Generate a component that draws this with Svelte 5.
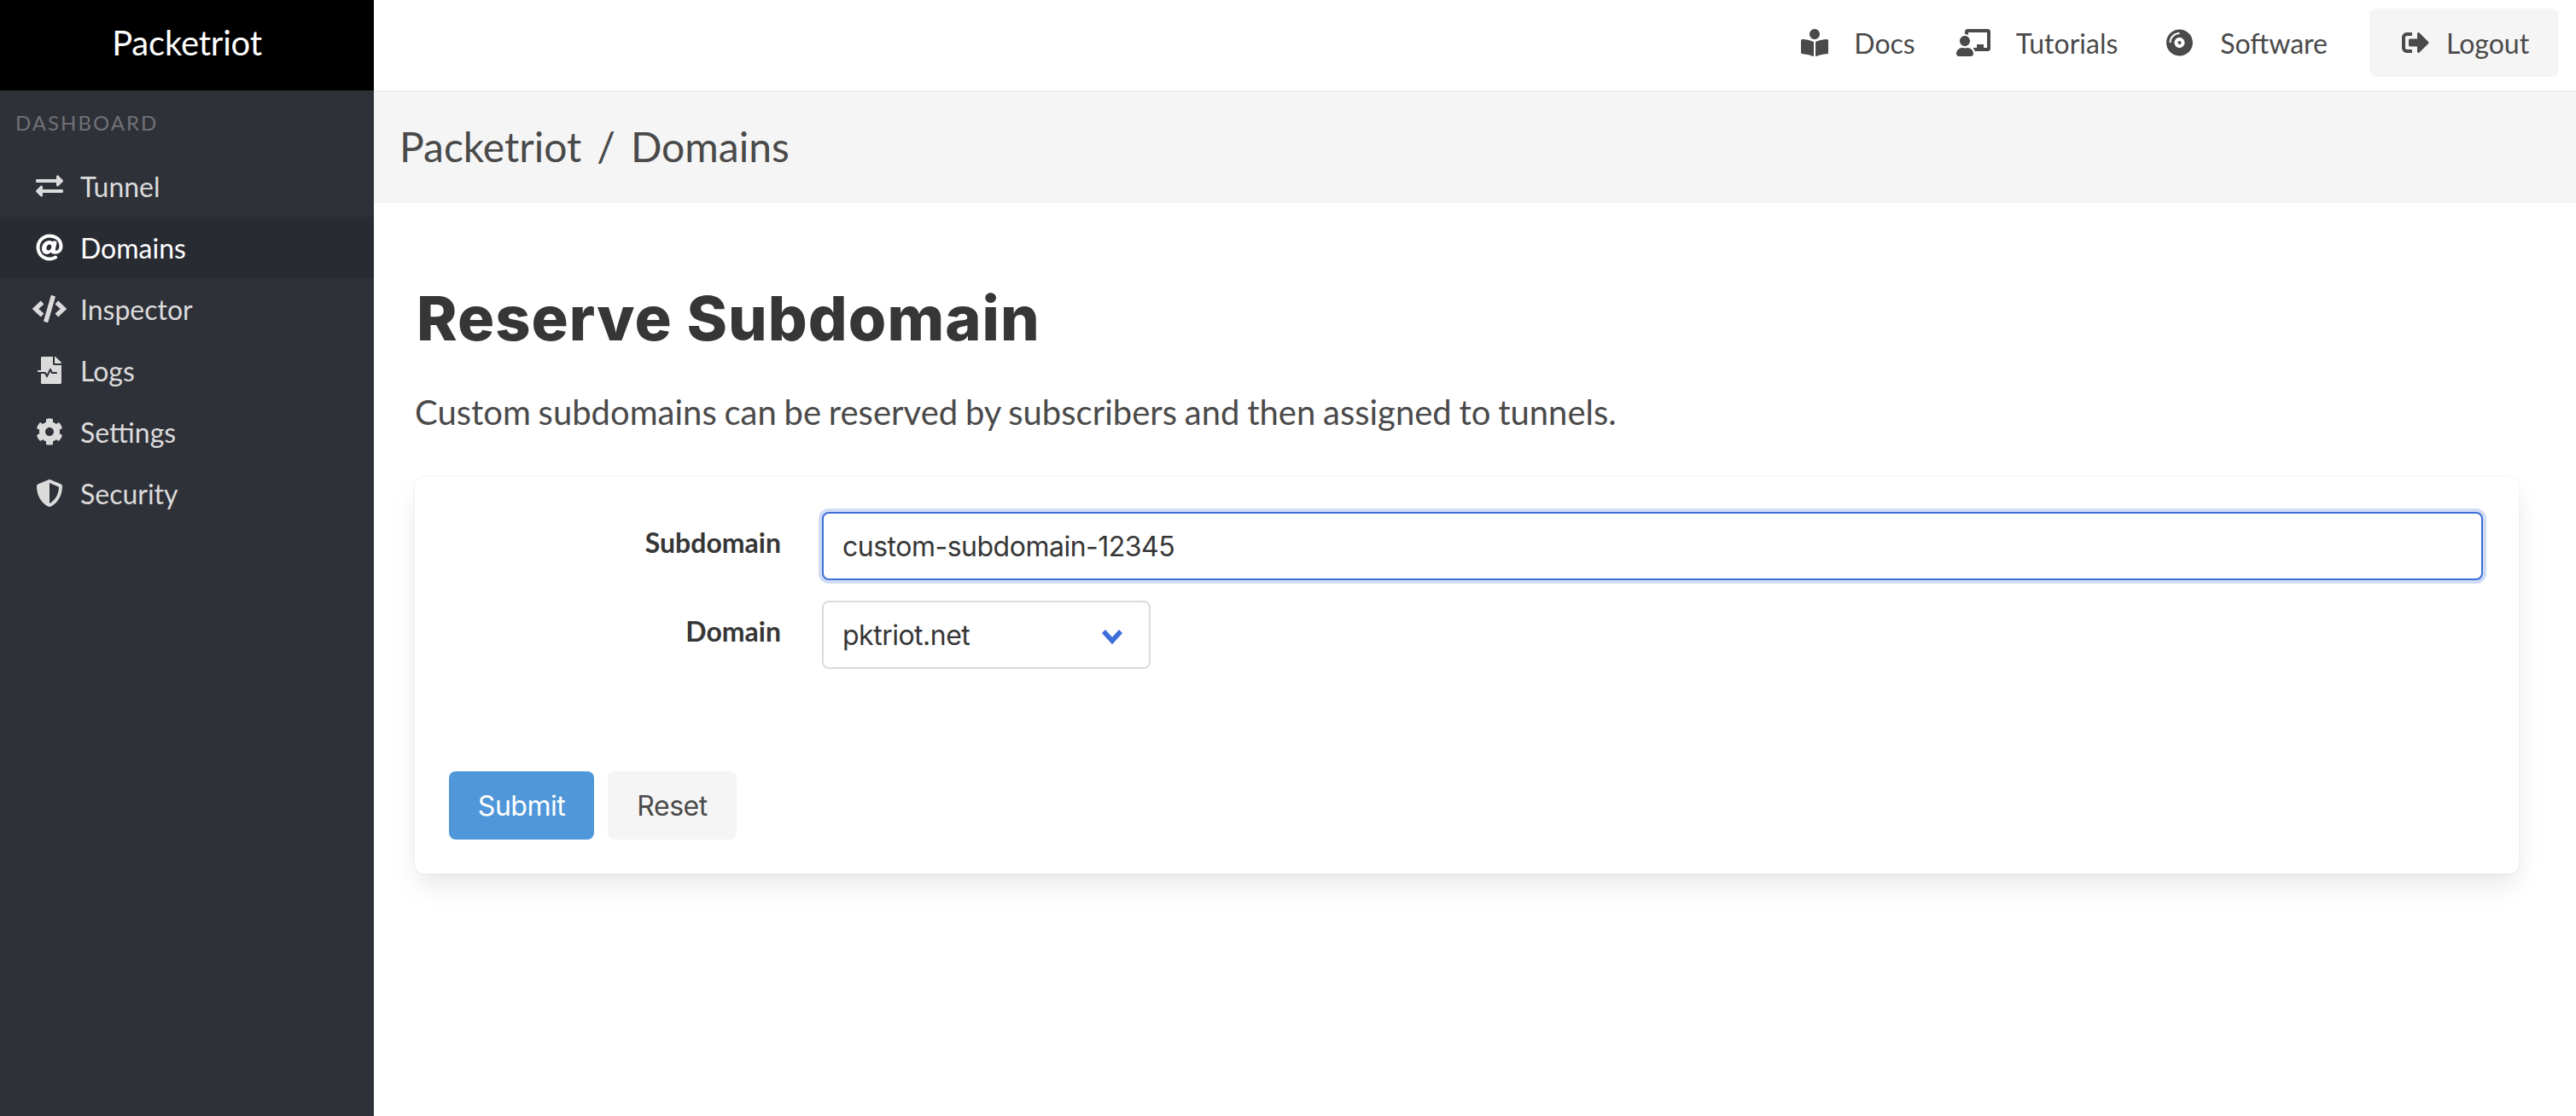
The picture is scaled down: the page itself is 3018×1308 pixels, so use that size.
<script>
  const I = {
    tunnel: [512, "M0 168v-16c0-13.255 10.745-24 24-24h360V80c0-21.367 25.899-32.042 40.971-16.971l80 80c9.372 9.373 9.372 24.569 0 33.941l-80 80C409.956 271.982 384 261.456 384 240v-48H24c-13.255 0-24-10.745-24-24zm488 152H128v-48c0-21.314-25.862-32.08-40.971-16.971l-80 80c-9.372 9.373-9.372 24.569 0 33.941l80 80C102.057 463.997 128 453.437 128 432v-48h360c13.255 0 24-10.745 24-24v-16c0-13.255-10.745-24-24-24z"],
    at: [512, "M256 8C118.941 8 8 118.919 8 256c0 137.059 110.919 248 248 248 48.154 0 95.342-14.14 135.408-40.223 12.005-7.815 14.625-24.288 5.552-35.372l-10.177-12.433c-7.671-9.371-21.179-11.667-31.373-5.129C325.92 429.757 291.314 440 256 440c-101.458 0-184-82.542-184-184S154.542 72 256 72c100.139 0 184 57.619 184 160 0 38.786-21.093 79.742-58.17 83.693-17.349-.454-16.91-12.857-13.476-30.024l23.433-121.11C394.653 149.75 383.308 136 368.225 136h-44.981a13.518 13.518 0 0 0-13.432 11.993l-.01.092c-14.697-17.901-40.448-21.775-59.971-21.775-74.58 0-137.831 62.234-137.831 151.46 0 65.303 36.785 105.87 96 105.87 26.984 0 57.369-15.637 74.991-38.333 9.522 34.104 40.613 34.103 70.71 34.103C462.609 379.41 504 307.798 504 232 504 95.653 394.023 8 256 8zm-21.68 304.43c-22.249 0-36.07-15.623-36.07-40.771 0-44.993 30.779-72.729 58.63-72.729 22.292 0 35.601 15.241 35.601 40.77 0 45.061-33.875 72.73-58.161 72.73z"],
    code: [640, "M278.9 511.5l-61-17.7c-6.4-1.8-10-8.5-8.2-14.9L346.2 8.7c1.8-6.4 8.5-10 14.9-8.2l61 17.7c6.4 1.8 10 8.5 8.2 14.9L293.8 503.3c-1.9 6.4-8.5 10.1-14.9 8.2zm-114-112.2l43.5-46.4c4.6-4.9 4.3-12.7-.8-17.2L117 256l90.6-79.7c5.1-4.5 5.5-12.3.8-17.2l-43.5-46.4c-4.5-4.8-12.1-5.1-17-.5L3.8 247.2c-5.1 4.7-5.1 12.8 0 17.5l144.1 135.1c4.9 4.6 12.5 4.4 17-.5zm327.2.6l144.1-135.1c5.1-4.7 5.1-12.8 0-17.5L492.1 112.1c-4.8-4.5-12.4-4.3-17 .5L431.6 159c-4.6 4.9-4.3 12.7.8 17.2L523 256l-90.6 79.7c-5.1 4.5-5.5 12.3-.8 17.2l43.5 46.4c4.5 4.9 12.1 5.1 17 .6z"],
    logs: [448, "M288 136V0H88C74.7 0 64 10.7 64 24v232H8c-4.4 0-8 3.6-8 8v16c0 4.4 3.6 8 8 8h140.9c3 0 5.8 1.7 7.2 4.4l19.9 39.8 56.8-113.7c2.9-5.9 11.4-5.9 14.3 0l34.7 69.5H352c8.8 0 16 7.2 16 16s-7.2 16-16 16h-89.9L240 275.8l-56.8 113.7c-2.9 5.9-11.4 5.9-14.3 0L134.1 320H64v168c0 13.3 10.7 24 24 24h336c13.3 0 24-10.7 24-24V160H312c-13.2 0-24-10.8-24-24zm153-31L343.1 7c-4.5-4.5-10.6-7-17-7H320v128h128v-6.1c0-6.3-2.5-12.4-7-16.9z"],
    cog: [512, "M487.4 315.7l-42.6-24.6c4.3-23.2 4.3-47 0-70.2l42.6-24.6c4.9-2.8 7.1-8.6 5.5-14-11.1-35.6-30-67.8-54.7-94.6-3.8-4.1-10-5.1-14.8-2.3L380.8 110c-17.9-15.4-38.5-27.3-60.8-35.1V25.8c0-5.6-3.9-10.5-9.4-11.7-36.7-8.2-74.3-7.8-109.2 0-5.5 1.2-9.4 6.1-9.4 11.7V75c-22.2 7.9-42.8 19.8-60.8 35.1L88.7 85.5c-4.9-2.8-11-1.9-14.8 2.3-24.7 26.7-43.6 58.9-54.7 94.6-1.7 5.4.6 11.2 5.5 14L67.3 221c-4.3 23.2-4.3 47 0 70.2l-42.6 24.6c-4.9 2.8-7.1 8.6-5.5 14 11.1 35.6 30 67.8 54.7 94.6 3.8 4.1 10 5.1 14.8 2.3l42.6-24.6c17.9 15.4 38.5 27.3 60.8 35.1v49.2c0 5.6 3.9 10.5 9.4 11.7 36.7 8.2 74.3 7.8 109.2 0 5.5-1.2 9.4-6.1 9.4-11.7v-49.2c22.2-7.9 42.8-19.8 60.8-35.1l42.6 24.6c4.9 2.8 11 1.9 14.8-2.3 24.7-26.7 43.6-58.9 54.7-94.6 1.5-5.5-.7-11.3-5.6-14.1zM256 336c-44.1 0-80-35.9-80-80s35.9-80 80-80 80 35.9 80 80-35.9 80-80 80z"],
    shield: [512, "M466.5 83.7l-192-80a48.15 48.15 0 0 0-36.9 0l-192 80C27.7 91.1 16 108.6 16 128c0 198.5 114.5 335.7 221.5 380.3 11.8 4.9 25.1 4.9 36.9 0C360.1 472.6 496 349.3 496 128c0-19.4-11.7-36.9-29.5-44.3zM256.1 446.3l-.1-381 175.9 73.3c-3.3 151.4-82.1 261.1-175.8 307.7z"],
    book: [512, "M352 96c0-53.02-42.98-96-96-96s-96 42.98-96 96 42.98 96 96 96 96-42.98 96-96zM233.59 241.1c-59.33-36.32-155.43-46.3-203.79-49.05C13.55 191.13 0 203.51 0 219.14v222.8c0 14.33 11.59 26.28 26.49 27.05 43.66 2.29 131.99 10.68 193.04 41.43 9.37 4.72 20.48-1.71 20.48-11.87V252.56c-.01-4.67-2.32-8.95-6.42-11.46zm248.61-49.05c-48.35 2.74-144.46 12.73-203.78 49.05-4.1 2.51-6.41 6.96-6.41 11.63v245.79c0 10.19 11.14 16.63 20.54 11.9 61.04-30.72 149.32-39.11 192.97-41.4 14.9-.78 26.49-12.73 26.49-27.06V219.14c-.01-15.63-13.56-28.01-29.81-27.09z"],
    teacher: [640, "M208 352c-2.39 0-4.78.35-7.06 1.09C187.98 357.3 174.35 360 160 360c-14.35 0-27.98-2.7-40.95-6.91-2.28-.74-4.66-1.09-7.05-1.09C49.94 352-.33 402.48 0 464.62.14 490.88 21.73 512 48 512h224c26.27 0 47.86-21.12 48-47.38.33-62.14-49.94-112.62-112-112.62zm-48-32c53.02 0 96-42.98 96-96s-42.98-96-96-96-96 42.98-96 96 42.98 96 96 96zM592 0H208c-26.47 0-48 22.25-48 49.59V96c23.42 0 45.1 6.78 64 17.8V64h352v288h-64v-64H384v64h-76.24c19.1 16.69 33.12 38.73 39.69 64H592c26.47 0 48-22.25 48-49.59V49.59C640 22.25 618.47 0 592 0z"],
    disc: [496, "M248 8C111 8 0 119 0 256s111 248 248 248 248-111 248-248S385 8 248 8zM88 256H56c0-105.9 86.1-192 192-192v32c-88.2 0-160 71.8-160 160zm160 96c-53 0-96-43-96-96s43-96 96-96 96 43 96 96-43 96-96 96zm0-128c-17.7 0-32 14.3-32 32s14.3 32 32 32 32-14.3 32-32-14.3-32-32-32z"],
    out: [512, "M497 273L329 441c-15 15-41 4.5-41-17v-96H152c-13.3 0-24-10.7-24-24v-96c0-13.3 10.7-24 24-24h136V88c0-21.4 25.9-32 41-17l168 168c9.3 9.4 9.3 24.6 0 34zM192 436v-40c0-6.6-5.4-12-12-12H96c-17.7 0-32-14.3-32-32V160c0-17.7 14.3-32 32-32h84c6.6 0 12-5.4 12-12V76c0-6.6-5.4-12-12-12H96c-53 0-96 43-96 96v192c0 53 43 96 96 96h84c6.6 0 12-5.4 12-12z"]
  };
  const menu = [
    { label: 'Tunnel', icon: 'tunnel' },
    { label: 'Domains', icon: 'at', active: true },
    { label: 'Inspector', icon: 'code' },
    { label: 'Logs', icon: 'logs' },
    { label: 'Settings', icon: 'cog' },
    { label: 'Security', icon: 'shield' }
  ];
  const links = [
    { label: 'Docs', icon: 'book' },
    { label: 'Tutorials', icon: 'teacher' },
    { label: 'Software', icon: 'disc' }
  ];
</script>

{#snippet icon(name)}
  <svg class="icon" viewBox="0 0 {I[name][0]} 512" aria-hidden="true"><path fill="currentColor" d={I[name][1]} /></svg>
{/snippet}

<div class="app">
  <aside class="sidebar">
    <div class="brand">Packetriot</div>
    <p class="menu-label">DASHBOARD</p>
    <ul class="menu">
      {#each menu as m}
        <li class:active={m.active}>
          <span class="ico">{@render icon(m.icon)}</span>
          <span>{m.label}</span>
        </li>
      {/each}
    </ul>
  </aside>

  <div class="main">
    <header class="top">
      {#each links as l}
        <a class="link" href="#top">
          <span class="ico">{@render icon(l.icon)}</span>
          <span>{l.label}</span>
        </a>
      {/each}
      <a class="logout" href="#top">
        <span class="ico">{@render icon('out')}</span>
        <span>Logout</span>
      </a>
    </header>

    <div class="crumb"><span>Packetriot</span><span class="sep">/</span><span>Domains</span></div>

    <section class="content">
      <h1>Reserve Subdomain</h1>
      <p class="lead">Custom subdomains can be reserved by subscribers and then assigned to tunnels.</p>

      <form class="box">
        <div class="row">
          <label for="sub">Subdomain</label>
          <input id="sub" class="input" type="text" value="custom-subdomain-12345" />
        </div>
        <div class="row">
          <label for="dom">Domain</label>
          <div class="select">
            <select id="dom"><option>pktriot.net</option></select>
            <svg class="chev" viewBox="0 0 14 10" preserveAspectRatio="none" aria-hidden="true"><path d="M1.6 1.6 7 7.4l5.4-5.8" fill="none" stroke="currentColor" stroke-width="3" /></svg>
          </div>
        </div>
        <div class="buttons">
          <button type="button" class="btn primary">Submit</button>
          <button type="button" class="btn">Reset</button>
        </div>
      </form>
    </section>
  </div>
</div>

<style>
  :global(body) { margin: 0; background: #fff; }
  :global(*) { box-sizing: border-box; }
  .app {
    display: flex;
    height: 1308px;
    overflow: hidden;
    font-family: Lato, "Open Sans", sans-serif;
    font-size: 32px;
    color: #4a4a4a;
  }
  .icon { height: 32px; display: block; }
  .ico { width: 40px; display: flex; justify-content: center; flex: none; }

  .sidebar { width: 438px; flex: none; background: #2f3139; }
  .brand {
    height: 106px;
    background: #000;
    color: #fff;
    font-size: 40px;
    letter-spacing: -0.2px;
    line-height: 100px;
    text-align: center;
  }
  .menu-label {
    margin: 0;
    padding: 22px 0 0 18px;
    height: 76px;
    font-size: 24px;
    line-height: 32px;
    letter-spacing: 2px;
    color: #6f7176;
  }
  .menu { list-style: none; margin: 0; padding: 0; }
  .menu li {
    height: 72px;
    padding-left: 38px;
    display: flex;
    align-items: center;
    gap: 16px;
    color: #dbdbdb;
  }
  .menu li.active { background: #292b33; color: #fff; }

  .main { flex: 1; min-width: 0; display: flex; flex-direction: column; }
  .top {
    height: 108px;
    flex: none;
    border-bottom: 2px solid #eeeeee;
    display: flex;
    justify-content: flex-end;
    align-items: center;
    padding: 0 20px 6px 0;
  }
  a { color: inherit; text-decoration: none; display: flex; align-items: center; }
  .link { gap: 28px; margin-right: 51px; }
  .link:nth-child(1) { gap: 26px; margin-right: 48px; }
  .link:nth-child(2) { gap: 30px; margin-right: 52px; }
  .logout {
    height: 80px;
    width: 222px;
    margin-left: -2px;
    padding-left: 34px;
    gap: 16px;
    background: #f5f5f5;
    border-radius: 8px;
  }

  .crumb {
    height: 130px;
    flex: none;
    background: #f5f5f5;
    padding: 0 0 4px 30px;
    font-size: 48px;
    display: flex;
    align-items: center;
    gap: 18px;
  }

  .content { padding: 90px 67px 0 48px; }
  h1 {
    margin: 0;
    font-family: Inter, sans-serif;
    font-weight: 800;
    font-size: 72px;
    letter-spacing: 1.05px;
    line-height: 90px;
    color: #363636;
    padding-left: 2px;
  }
  .lead { margin: 35px 0 46px; font-size: 40px; line-height: 60px; word-spacing: -1.5px; }

  .box {
    background: #fff;
    border-radius: 12px;
    box-shadow: 0 16px 32px -4px rgba(10,10,10,.1), 0 0 0 2px rgba(10,10,10,.02);
    padding: 41px 42px 40px 40px;
  }
  .row { display: grid; grid-template-columns: 389px 1fr; column-gap: 48px; margin-bottom: 24px; }
  label { font-weight: 700; color: #363636; text-align: right; line-height: 72px; }
  .input, select {
    height: 80px;
    font-family: Inter, sans-serif;
    font-size: 32px;
    letter-spacing: -0.5px;
    color: #363636;
    background: #fff;
    border-radius: 8px;
    padding: 0 22px;
    outline: none;
    border: 2px solid #dbdbdb;
  }
  .input {
    width: 100%;
    border-color: #3e6fd8;
    box-shadow: 0 0 0 4px #d0dcf5;
  }
  .select { position: relative; width: 385px; }
  select { appearance: none; width: 100%; }
  .chev {
    position: absolute;
    right: 32px;
    top: 33px;
    width: 26px;
    height: 19px;
    color: #3e6fd8;
  }
  .buttons { display: flex; gap: 16px; margin-top: 120px; }
  .btn {
    height: 80px;
    width: 151px;
    border: 0;
    border-radius: 8px;
    background: #f5f5f5;
    color: #4a4a4a;
    font-family: Inter, sans-serif;
    font-size: 32px;
    letter-spacing: -0.5px;
  }
  .primary { width: 170px; background: #5097d9; color: #fff; }
</style>
